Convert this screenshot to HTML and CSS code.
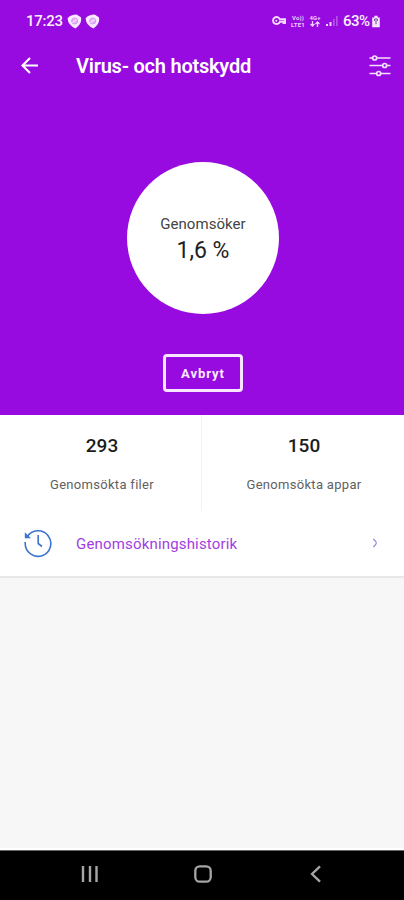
FILE: index.html
```
<!DOCTYPE html>
<html lang="sv">
<head>
<meta charset="utf-8">
<title>Virus- och hotskydd</title>
<link rel="stylesheet" href="styles.css">
</head>
<body>
<section class="hero">
  <div class="status">
    <span class="time">17:23</span>
    <svg class="shield" viewBox="0 0 14 16"><path d="M.5 5Q3.500 1.500 9 1.500L13 4Q14.500 10 8 14.500Q1 12 .5 5Z" fill="#fbeaff"/><circle cx="7.200" cy="7.500" r="2.900" fill="#e3b4f6" stroke="#cf94ee" stroke-width=".8"/><path d="M5 9L9 6" stroke="#f8e4ff"/></svg>
    <svg class="shield" viewBox="0 0 14 16"><path d="M.5 5Q3.500 1.500 9 1.500L13 4Q14.500 10 8 14.500Q1 12 .5 5Z" fill="#fbeaff"/><circle cx="7.200" cy="7.500" r="2.900" fill="#e3b4f6" stroke="#cf94ee" stroke-width=".8"/><path d="M5 9L9 6" stroke="#f8e4ff"/></svg>
    <div class="right">
      <svg class="key" viewBox="0 0 14 10"><path d="M7.800 3.300H13V7H11.500V5.800H7.800A3.500 3.500 0 1 1 7.800 3.300Z" fill="none" stroke="#f4dcff" stroke-width="1.900"/><circle cx="4.300" cy="4.700" r="1" fill="#f4dcff"/></svg>
      <span class="net lte"><span>Vo))</span><span>LTE1</span></span>
      <span class="net gen"><span>4G+</span><svg viewBox="0 0 10 6"><path d="M2.500 0V5M.5 3L2.500 5L4.500 3M7.500 6V1M5.500 3L7.500 1L9.500 3" fill="none" stroke="#eed0ff" stroke-width="1.300"/></svg></span>
      <svg class="signal" viewBox="0 0 12 12"><path d="M0 9h2v2H0zM3.500 7h2v4h-2z" fill="#efd2ff"/><path d="M7 4h1.700v7H7zM10 1h1.700v10H10z" fill="#b550e6"/></svg>
      <span class="pct">63%</span>
      <svg class="battery" viewBox="0 0 9 12"><path d="M3 .8h3v1.400h2v9H1v-9h2z" fill="#f6e5ff"/><path d="M3.200 5.500V4.200q1.300-1.500 2.600 0v1.300M4.500 5v3.500" fill="none" stroke="#76518c" stroke-width="1"/></svg>
    </div>
  </div>
  <header class="bar">
    <svg class="back" viewBox="0 0 20 20"><path d="M9.500 2L2 9.500L9.500 17M2.500 9.500H17.500" fill="none" stroke="#fff" stroke-width="2.100"/></svg>
    <h1>Virus- och hotskydd</h1>
    <svg class="sliders" viewBox="0 0 22 22"><g fill="none" stroke="#f5dfff" stroke-width="1.700"><path d="M.5 3H3.500M8 3H21.500M.5 10.500H13.500M18 10.500H21.500M.5 18.500H7.500M12 18.500H21.500"/><circle cx="5.700" cy="3" r="2"/><circle cx="15.700" cy="10.500" r="2"/><circle cx="9.700" cy="18.500" r="2"/></g></svg>
  </header>
  <div class="disc"><span class="label">Genomsöker</span><span class="value">1,6 %</span></div>
  <button class="cancel">Avbryt</button>
</section>
<section class="stats">
  <div class="stat"><b>293</b><span>Genomsökta filer</span></div>
  <div class="stat"><b>150</b><span>Genomsökta appar</span></div>
</section>
<a class="history">
  <svg class="clock" viewBox="0 0 30 30"><g fill="none" stroke="#3b76cc" stroke-width="1.600"><path d="M4.300 8.500A12.800 12.800 0 1 1 2.200 15.500V14"/><path d="M15.200 7V15.500L19 18.500"/></g><path d="M1.800 4.300V10.200H8Z" fill="#3b76cc"/></svg>
  <span>Genomsökningshistorik</span>
  <svg class="chev" viewBox="0 0 6 10"><path d="M1.300 1Q4.300 3.500 4.300 5Q4.300 6.500 1.300 9" fill="none" stroke="#8b83df" stroke-width="1.200"/></svg>
</a>
<main class="blank"></main>
<nav class="nav">
  <svg viewBox="0 0 18 18"><path d="M2 1V17M9 1V17M15.500 1V17" stroke="#a6a6a6" stroke-width="2.400" fill="none"/></svg>
  <svg viewBox="0 0 18 18"><rect x="1.300" y="1.300" width="15.400" height="15.400" rx="4.500" fill="none" stroke="#a6a6a6" stroke-width="2.300"/></svg>
  <svg viewBox="0 0 18 18"><path d="M13 1.300L5 9L13 16.700" fill="none" stroke="#a6a6a6" stroke-width="2.300"/></svg>
</nav>
</body>
</html>
```
FILE: styles.css
```
* { box-sizing: border-box; }
body { margin: 0; width: 404px; height: 900px; display: flex; flex-direction: column; font-family: Roboto, "Liberation Sans", sans-serif; background: #f7f7f7; overflow: hidden; }
svg { display: block; flex: none; }
.hero { height: 415px; flex: none; background: #970be0; color: #fff; display: flex; flex-direction: column; align-items: center; }
.status { width: 100%; height: 42px; flex: none; padding: 0 23px 0 26px; display: flex; align-items: center; }
.time { font-size: 15px; font-weight: 500; letter-spacing: -.25px; margin-right: 4px; width: 37px; color: #fcefff; white-space: nowrap; }
.shield { width: 15px; height: 17px; margin-right: 3px; }
.right { margin-left: auto; display: flex; align-items: center; }
.key { width: 14px; height: 10px; margin-right: 4px; }
.net { display: flex; flex-direction: column; align-items: center; font-size: 6px; line-height: 7px; font-weight: 700; color: #eed0ff; white-space: nowrap; }
.net span { height: 7px; }
.net svg { width: 10px; height: 6px; margin-bottom: 1px; }
.lte { width: 16px; margin-right: 2px; letter-spacing: .2px; }
.gen { width: 14px; margin-right: 4px; }
.signal { width: 12px; height: 12px; margin-right: 5px; }
.pct { width: 27px; font-size: 15px; font-weight: 500; letter-spacing: -.5px; color: #fcefff; white-space: nowrap; }
.battery { width: 10px; height: 13px; margin-left: 1px; }
.bar { width: 100%; height: 48px; flex: none; display: flex; align-items: center; padding: 0 13px 0 20px; }
.back { width: 21px; height: 20px; }
h1 { margin: 0 auto 0 35px; font-size: 20px; font-weight: 600; letter-spacing: -.23px; white-space: nowrap; line-height: 24px; }
.sliders { width: 22px; height: 22px; }
.disc { width: 152px; height: 152px; flex: none; margin: 72px 0 40px 2px; border-radius: 50%; background: #fff; color: #222; display: flex; flex-direction: column; align-items: center; padding-top: 52px; }
.label { font-size: 15px; line-height: 20px; letter-spacing: .05px; color: #444; }
.value { font-size: 23px; line-height: 33px; font-weight: 400; }
.cancel { width: 80px; height: 38px; margin-left: 2px; border: 3px solid #f8e5ff; border-radius: 4px; background: none; color: #f9eaff; font: 700 13px Roboto, sans-serif; letter-spacing: .95px; padding: 1px 0 0; }
.stats { height: 98px; flex: none; display: flex; background: #fff; }
.stat { flex: 1; display: flex; flex-direction: column; align-items: center; padding: 19px 0 0 2px; }
.stat:first-child { background: linear-gradient(#f2f2f2, #f2f2f2) right top / 1px 96px no-repeat; }
.stat b { font-size: 19px; font-weight: 500; line-height: 24px; letter-spacing: 0; color: #1c1c1c; }
.stat span { margin-top: 18px; font-size: 13px; line-height: 18px; letter-spacing: .3px; color: #616161; }
.history { height: 65px; flex: none; display: flex; align-items: center; padding: 0 26px 4px 23px; background: #fff; border-bottom: 2px solid #e7e7e7; color: #a13ee0; }
.clock { width: 30px; height: 30px; }
.history span { margin: 2px auto 0 23px; font-size: 15px; letter-spacing: .17px; white-space: nowrap; }
.chev { width: 6px; height: 10px; }
.blank { flex: 1; background: #f7f7f7; border-bottom: 2px solid #fff; }
.nav { height: 50px; flex: none; background: #000; border-top: 1px solid #666; display: flex; justify-content: space-between; align-items: center; padding: 0 79px 4px 81px; }
.nav svg { width: 18px; height: 18px; }
```
